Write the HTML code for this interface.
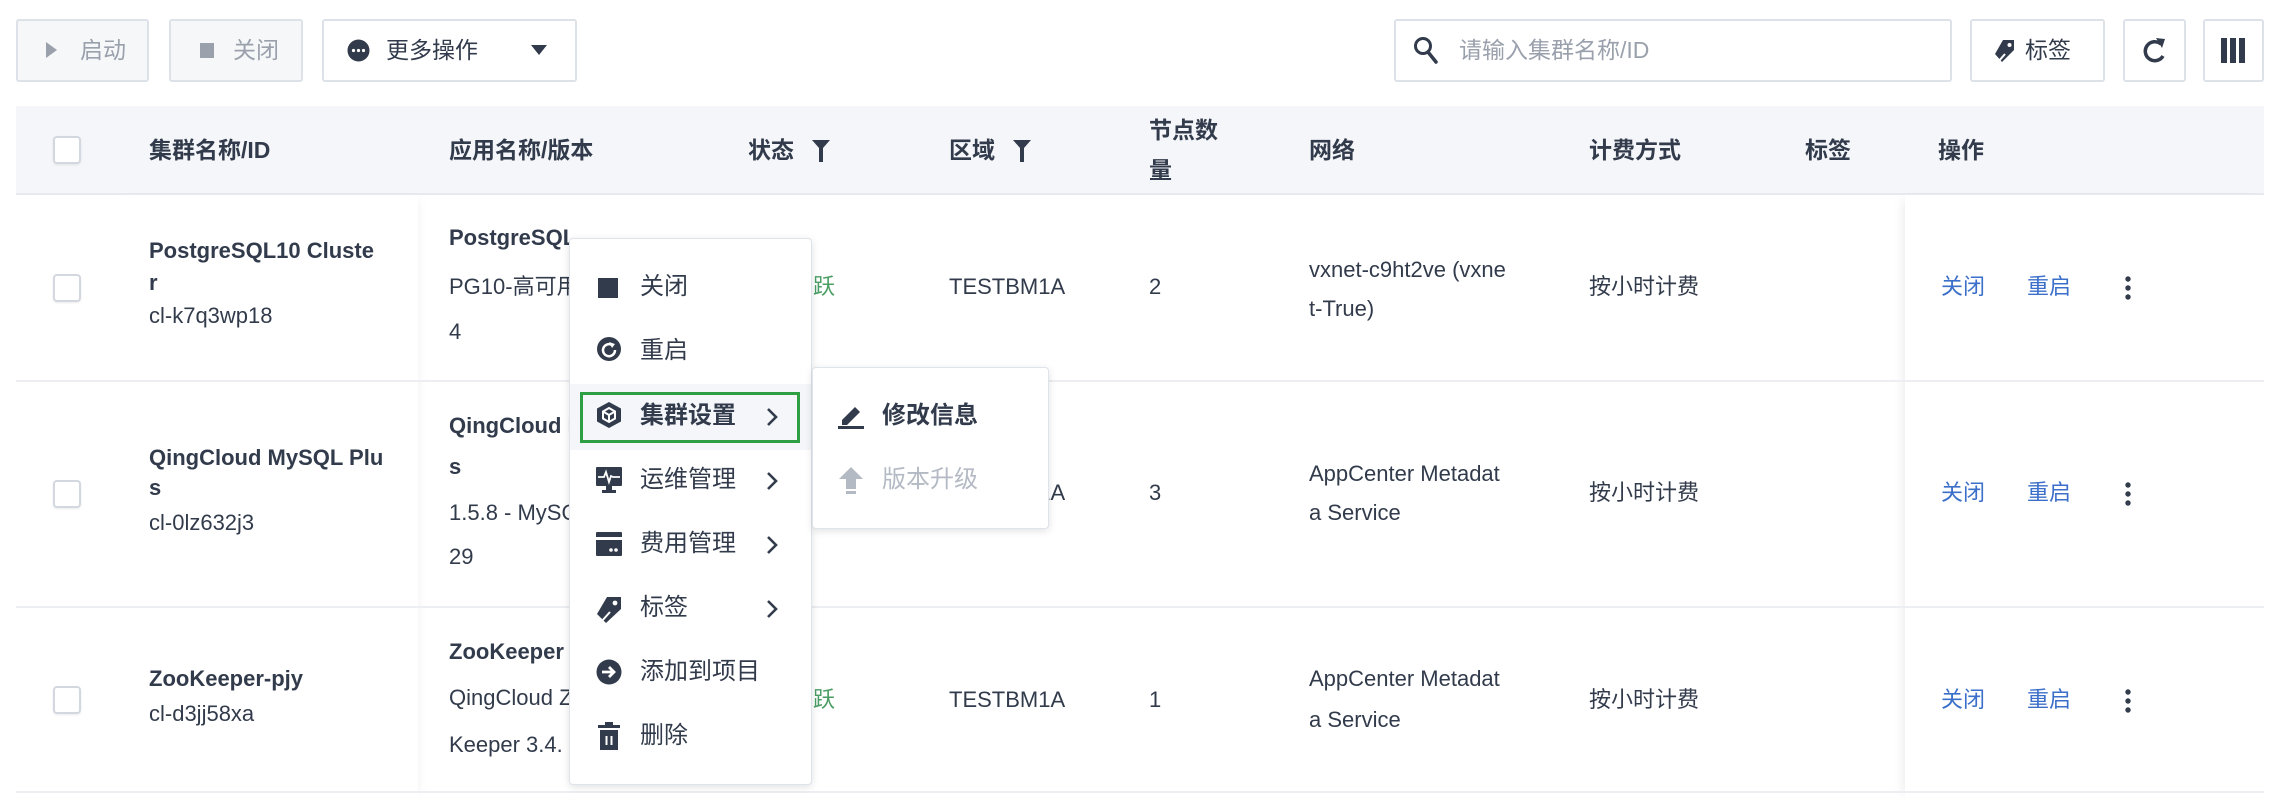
<!DOCTYPE html>
<html><head><meta charset="utf-8">
<style>
*{margin:0;padding:0;box-sizing:border-box}
body{width:2286px;height:800px;background:#fff;position:relative;overflow:hidden;font-family:"Liberation Sans","Noto Sans CJK SC",sans-serif;color:#323b4b;font-size:22px}
.a{position:absolute;white-space:nowrap;line-height:32px}
.b{font-weight:bold}
.btn{position:absolute;top:19px;height:63px;border:2px solid #dde1e8;border-radius:3px;background:#fff}
.dis{background:#f6f7f9;color:#9aa1ad}
.cb{position:absolute;width:28px;height:28px;border:2px solid #d3d8e0;border-radius:4px;background:#fff;box-shadow:0 1px 2px rgba(0,0,0,.08)}
.line{position:absolute;left:16px;width:2248px;height:2px;background:#eceef2}
.link{color:#3b6fc9}
.menu{position:absolute;background:#fff;border:1px solid #dfe3ea;border-radius:4px;box-shadow:0 2px 8px rgba(0,0,0,.12)}
.ic{position:absolute}
</style></head><body>

<!-- toolbar -->
<div class="btn dis" style="left:16px;width:133px"></div>
<svg class="ic" style="left:44px;top:41px" width="14" height="18"><path d="M2 1L13 9L2 17Z" fill="#9aa1ad"/></svg>
<div class="a" style="left:80px;top:34px;color:#9aa1ad;font-size:23px">启动</div>
<div class="btn dis" style="left:169px;width:134px"></div>
<div class="ic" style="left:200px;top:43px;width:14px;height:15px;background:#9aa1ad"></div>
<div class="a" style="left:233px;top:34px;color:#9aa1ad;font-size:23px">关闭</div>
<div class="btn" style="left:322px;width:255px"></div>
<svg class="ic" style="left:347px;top:39px" width="23" height="23"><circle cx="11.5" cy="11.5" r="11" fill="#323b4b"/><circle cx="6.5" cy="11.5" r="1.6" fill="#fff"/><circle cx="11.5" cy="11.5" r="1.6" fill="#fff"/><circle cx="16.5" cy="11.5" r="1.6" fill="#fff"/></svg>
<div class="a" style="left:386px;top:34px;font-size:23px">更多操作</div>
<svg class="ic" style="left:531px;top:45px" width="16" height="10"><path d="M0 0H16L8 10Z" fill="#323b4b"/></svg>

<div class="btn" style="left:1394px;width:558px"></div>
<svg class="ic" style="left:1413px;top:36px" width="26" height="30"><circle cx="10" cy="10" r="7.5" fill="none" stroke="#323b4b" stroke-width="3"/><path d="M15 16L23 26" stroke="#323b4b" stroke-width="3.5" stroke-linecap="round"/></svg>
<div class="a" style="left:1459px;top:34px;color:#9aa1ad;font-size:23px">请输入集群名称/ID</div>
<div class="btn" style="left:1970px;width:135px"></div>
<svg class="ic" style="left:1994px;top:38px" width="22" height="26"><path d="M9 2L20 2L20 12L8 24L1 16Z" fill="#323b4b"/><circle cx="15.5" cy="7" r="2" fill="#fff"/><path d="M4 24L11 16" stroke="#fff" stroke-width="2"/></svg>
<div class="a" style="left:2025px;top:34px;font-size:23px">标签</div>
<div class="btn" style="left:2123px;width:63px"></div>
<svg class="ic" style="left:2141px;top:35px" width="28" height="32"><path d="M20 9A9.5 9.5 0 1 0 22 21" fill="none" stroke="#323b4b" stroke-width="3.5"/><path d="M15 3L24 4L21 13Z" fill="#323b4b"/></svg>
<div class="btn" style="left:2203px;width:61px"></div>
<div class="ic" style="left:2221px;top:38px;width:6px;height:25px;background:#323b4b"></div>
<div class="ic" style="left:2230px;top:38px;width:6px;height:25px;background:#323b4b"></div>
<div class="ic" style="left:2239px;top:38px;width:6px;height:25px;background:#323b4b"></div>

<!-- header -->
<div style="position:absolute;left:16px;top:106px;width:2248px;height:88px;background:#f4f6f9"></div>
<div class="line" style="top:193px;background:#e6e9ee"></div>
<div class="cb" style="left:53px;top:136px"></div>
<div class="a b" style="left:149px;top:134px;font-size:23px">集群名称/ID</div>
<div class="a b" style="left:449px;top:134px;font-size:23px">应用名称/版本</div>
<div class="a b" style="left:748px;top:134px;font-size:23px">状态</div>
<svg class="ic" style="left:812px;top:140px" width="18" height="22"><path d="M0 0H18L11 8V22H7V8Z" fill="#323b4b"/></svg>
<div class="a b" style="left:949px;top:134px;font-size:23px">区域</div>
<svg class="ic" style="left:1013px;top:140px" width="18" height="22"><path d="M0 0H18L11 8V22H7V8Z" fill="#323b4b"/></svg>
<div class="a b" style="left:1149px;top:114px;font-size:23px">节点数</div>
<div class="a b" style="left:1149px;top:154px;font-size:23px">量</div>
<div class="a b" style="left:1309px;top:134px;font-size:23px">网络</div>
<div class="a b" style="left:1589px;top:134px;font-size:23px">计费方式</div>
<div class="a b" style="left:1805px;top:134px;font-size:23px">标签</div>
<div class="a b" style="left:1938px;top:134px;font-size:23px">操作</div>

<!-- column shadows -->
<div style="position:absolute;left:112px;top:194px;width:306px;height:606px;box-shadow:6px 0 10px -6px rgba(0,0,0,.06)"></div>
<div style="position:absolute;left:1905px;top:194px;width:360px;height:606px;box-shadow:-8px 0 10px -6px rgba(0,0,0,.08)"></div>

<div class="line" style="top:380px"></div>
<div class="line" style="top:606px"></div>
<div class="line" style="top:791px"></div>

<!-- row1 -->
<div class="cb" style="left:53px;top:274px"></div>
<div class="a b" style="left:149px;top:235px">PostgreSQL10 Cluste</div>
<div class="a b" style="left:149px;top:267px">r</div>
<div class="a" style="left:149px;top:300px">cl-k7q3wp18</div>
<div class="a b" style="left:449px;top:222px">PostgreSQL</div>
<div class="a" style="left:449px;top:271px">PG10-高可用</div>
<div class="a" style="left:449px;top:316px">4</div>
<div class="a" style="left:813px;top:271px;color:#4a9e63">跃</div>
<div class="a" style="left:949px;top:271px">TESTBM1A</div>
<div class="a" style="left:1149px;top:271px">2</div>
<div class="a" style="left:1309px;top:254px">vxnet-c9ht2ve (vxne</div>
<div class="a" style="left:1309px;top:293px">t-True)</div>
<div class="a" style="left:1589px;top:271px">按小时计费</div>
<div class="a link" style="left:1941px;top:271px">关闭</div>
<div class="a link" style="left:2027px;top:271px">重启</div>
<svg class="ic" style="left:2124px;top:276px" width="8" height="24"><circle cx="4" cy="3" r="2.7" fill="#323b4b"/><circle cx="4" cy="12" r="2.7" fill="#323b4b"/><circle cx="4" cy="21" r="2.7" fill="#323b4b"/></svg>

<!-- row2 -->
<div class="cb" style="left:53px;top:480px"></div>
<div class="a b" style="left:149px;top:442px">QingCloud MySQL Plu</div>
<div class="a b" style="left:149px;top:472px">s</div>
<div class="a" style="left:149px;top:507px">cl-0lz632j3</div>
<div class="a b" style="left:449px;top:410px">QingCloud MySQL Plu</div>
<div class="a b" style="left:449px;top:451px">s</div>
<div class="a" style="left:449px;top:497px">1.5.8 - MySQL</div>
<div class="a" style="left:449px;top:541px">29</div>
<div class="a" style="left:949px;top:477px">TESTBM1A</div>
<div class="a" style="left:1149px;top:477px">3</div>
<div class="a" style="left:1309px;top:458px">AppCenter Metadat</div>
<div class="a" style="left:1309px;top:497px">a Service</div>
<div class="a" style="left:1589px;top:477px">按小时计费</div>
<div class="a link" style="left:1941px;top:477px">关闭</div>
<div class="a link" style="left:2027px;top:477px">重启</div>
<svg class="ic" style="left:2124px;top:482px" width="8" height="24"><circle cx="4" cy="3" r="2.7" fill="#323b4b"/><circle cx="4" cy="12" r="2.7" fill="#323b4b"/><circle cx="4" cy="21" r="2.7" fill="#323b4b"/></svg>

<!-- row3 -->
<div class="cb" style="left:53px;top:686px"></div>
<div class="a b" style="left:149px;top:663px">ZooKeeper-pjy</div>
<div class="a" style="left:149px;top:698px">cl-d3jj58xa</div>
<div class="a b" style="left:449px;top:636px">ZooKeeper</div>
<div class="a" style="left:449px;top:682px">QingCloud ZooKeeper</div>
<div class="a" style="left:449px;top:729px">Keeper 3.4.</div>
<div class="a" style="left:813px;top:684px;color:#4a9e63">跃</div>
<div class="a" style="left:949px;top:684px">TESTBM1A</div>
<div class="a" style="left:1149px;top:684px">1</div>
<div class="a" style="left:1309px;top:663px">AppCenter Metadat</div>
<div class="a" style="left:1309px;top:704px">a Service</div>
<div class="a" style="left:1589px;top:684px">按小时计费</div>
<div class="a link" style="left:1941px;top:684px">关闭</div>
<div class="a link" style="left:2027px;top:684px">重启</div>
<svg class="ic" style="left:2124px;top:689px" width="8" height="24"><circle cx="4" cy="3" r="2.7" fill="#323b4b"/><circle cx="4" cy="12" r="2.7" fill="#323b4b"/><circle cx="4" cy="21" r="2.7" fill="#323b4b"/></svg>

<!-- main menu -->
<div class="menu" style="left:569px;top:238px;width:243px;height:547px">
  <div style="position:absolute;left:0;top:145px;width:241px;height:66px;background:#f4f6f9"></div>
  <div style="position:absolute;left:10px;top:153px;width:220px;height:51px;border:3px solid #2ea043"></div>
</div>
<div style="position:absolute;left:598px;top:278px;width:20px;height:20px;background:#323b4b"></div>
<div class="a" style="left:640px;top:271px;font-size:24px">关闭</div>
<svg class="ic" style="left:596px;top:336px" width="26" height="26"><circle cx="13" cy="13" r="12" fill="#323b4b"/><path d="M16 9A6 6 0 1 0 19 14" fill="none" stroke="#fff" stroke-width="2.5"/><path d="M13 6L19 8L16 12Z" fill="#fff"/></svg>
<div class="a" style="left:640px;top:335px;font-size:24px">重启</div>
<svg class="ic" style="left:596px;top:401px" width="26" height="28"><path d="M13 1L25 7.5V20.5L13 27L1 20.5V7.5Z" fill="#323b4b"/><path d="M13 7L19 10.5V17.5L13 21L7 17.5V10.5Z" fill="none" stroke="#fff" stroke-width="2"/><path d="M7 10.5L13 14L19 10.5M13 14V21" fill="none" stroke="#fff" stroke-width="2"/></svg>
<div class="a b" style="left:640px;top:400px;font-size:24px">集群设置</div>
<div class="a" style="left:640px;top:464px;font-size:24px">运维管理</div>
<svg class="ic" style="left:596px;top:467px" width="26" height="26"><rect x="0" y="0" width="26" height="19" rx="1" fill="#323b4b"/><path d="M2 10H8L10 5L13 15L15 9L17 10H24" fill="none" stroke="#fff" stroke-width="1.8"/><rect x="10" y="19" width="6" height="4" fill="#323b4b"/><rect x="6" y="23" width="14" height="3" fill="#323b4b"/></svg>
<div class="a" style="left:640px;top:528px;font-size:24px">费用管理</div>
<svg class="ic" style="left:596px;top:532px" width="26" height="24"><rect x="0" y="0" width="26" height="24" rx="1" fill="#323b4b"/><rect x="0" y="5" width="26" height="3" fill="#fff"/><circle cx="15" cy="18" r="1.8" fill="#fff"/><circle cx="20" cy="18" r="1.8" fill="#fff"/></svg>
<div class="a" style="left:640px;top:592px;font-size:24px">标签</div>
<svg class="ic" style="left:596px;top:595px" width="26" height="28"><path d="M11 2L25 2L25 14L10 28L1 19Z" fill="#323b4b"/><circle cx="19" cy="8" r="2.4" fill="#fff"/><path d="M5 27L14 17" stroke="#fff" stroke-width="2"/></svg>
<div class="a" style="left:640px;top:656px;font-size:24px">添加到项目</div>
<svg class="ic" style="left:596px;top:659px" width="26" height="26"><circle cx="13" cy="13" r="12.5" fill="#323b4b"/><path d="M6 13H18M13 8L18 13L13 18" fill="none" stroke="#fff" stroke-width="2.8"/></svg>
<div class="a" style="left:640px;top:720px;font-size:24px">删除</div>
<svg class="ic" style="left:598px;top:722px" width="22" height="28"><rect x="0" y="3" width="22" height="3" fill="#323b4b"/><rect x="7" y="0" width="8" height="3" fill="#323b4b"/><rect x="2" y="8" width="18" height="20" fill="#323b4b"/><rect x="7.5" y="14" width="2" height="9" fill="#fff"/><rect x="12.5" y="14" width="2" height="9" fill="#fff"/></svg>
<svg class="ic" style="left:766px;top:407px" width="12" height="20"><path d="M2 2L10 10L2 18" fill="none" stroke="#323b4b" stroke-width="2.6"/></svg>
<svg class="ic" style="left:766px;top:471px" width="12" height="20"><path d="M2 2L10 10L2 18" fill="none" stroke="#323b4b" stroke-width="2.6"/></svg>
<svg class="ic" style="left:766px;top:535px" width="12" height="20"><path d="M2 2L10 10L2 18" fill="none" stroke="#323b4b" stroke-width="2.6"/></svg>
<svg class="ic" style="left:766px;top:599px" width="12" height="20"><path d="M2 2L10 10L2 18" fill="none" stroke="#323b4b" stroke-width="2.6"/></svg>

<!-- submenu -->
<div class="menu" style="left:812px;top:367px;width:237px;height:162px"></div>
<svg class="ic" style="left:838px;top:403px" width="26" height="26"><path d="M4 17L17 4L22 9L9 22H4Z" fill="#323b4b"/><rect x="0" y="23" width="26" height="3" fill="#323b4b"/></svg>
<div class="a b" style="left:882px;top:400px;font-size:24px">修改信息</div>
<svg class="ic" style="left:838px;top:466px" width="26" height="28"><path d="M13 1L25 13H18V23H8V13H1Z" fill="#b4bac4"/><rect x="8" y="25" width="10" height="3" fill="#b4bac4"/></svg>
<div class="a" style="left:882px;top:464px;font-size:24px;color:#b4bac4">版本升级</div>
</body></html>
